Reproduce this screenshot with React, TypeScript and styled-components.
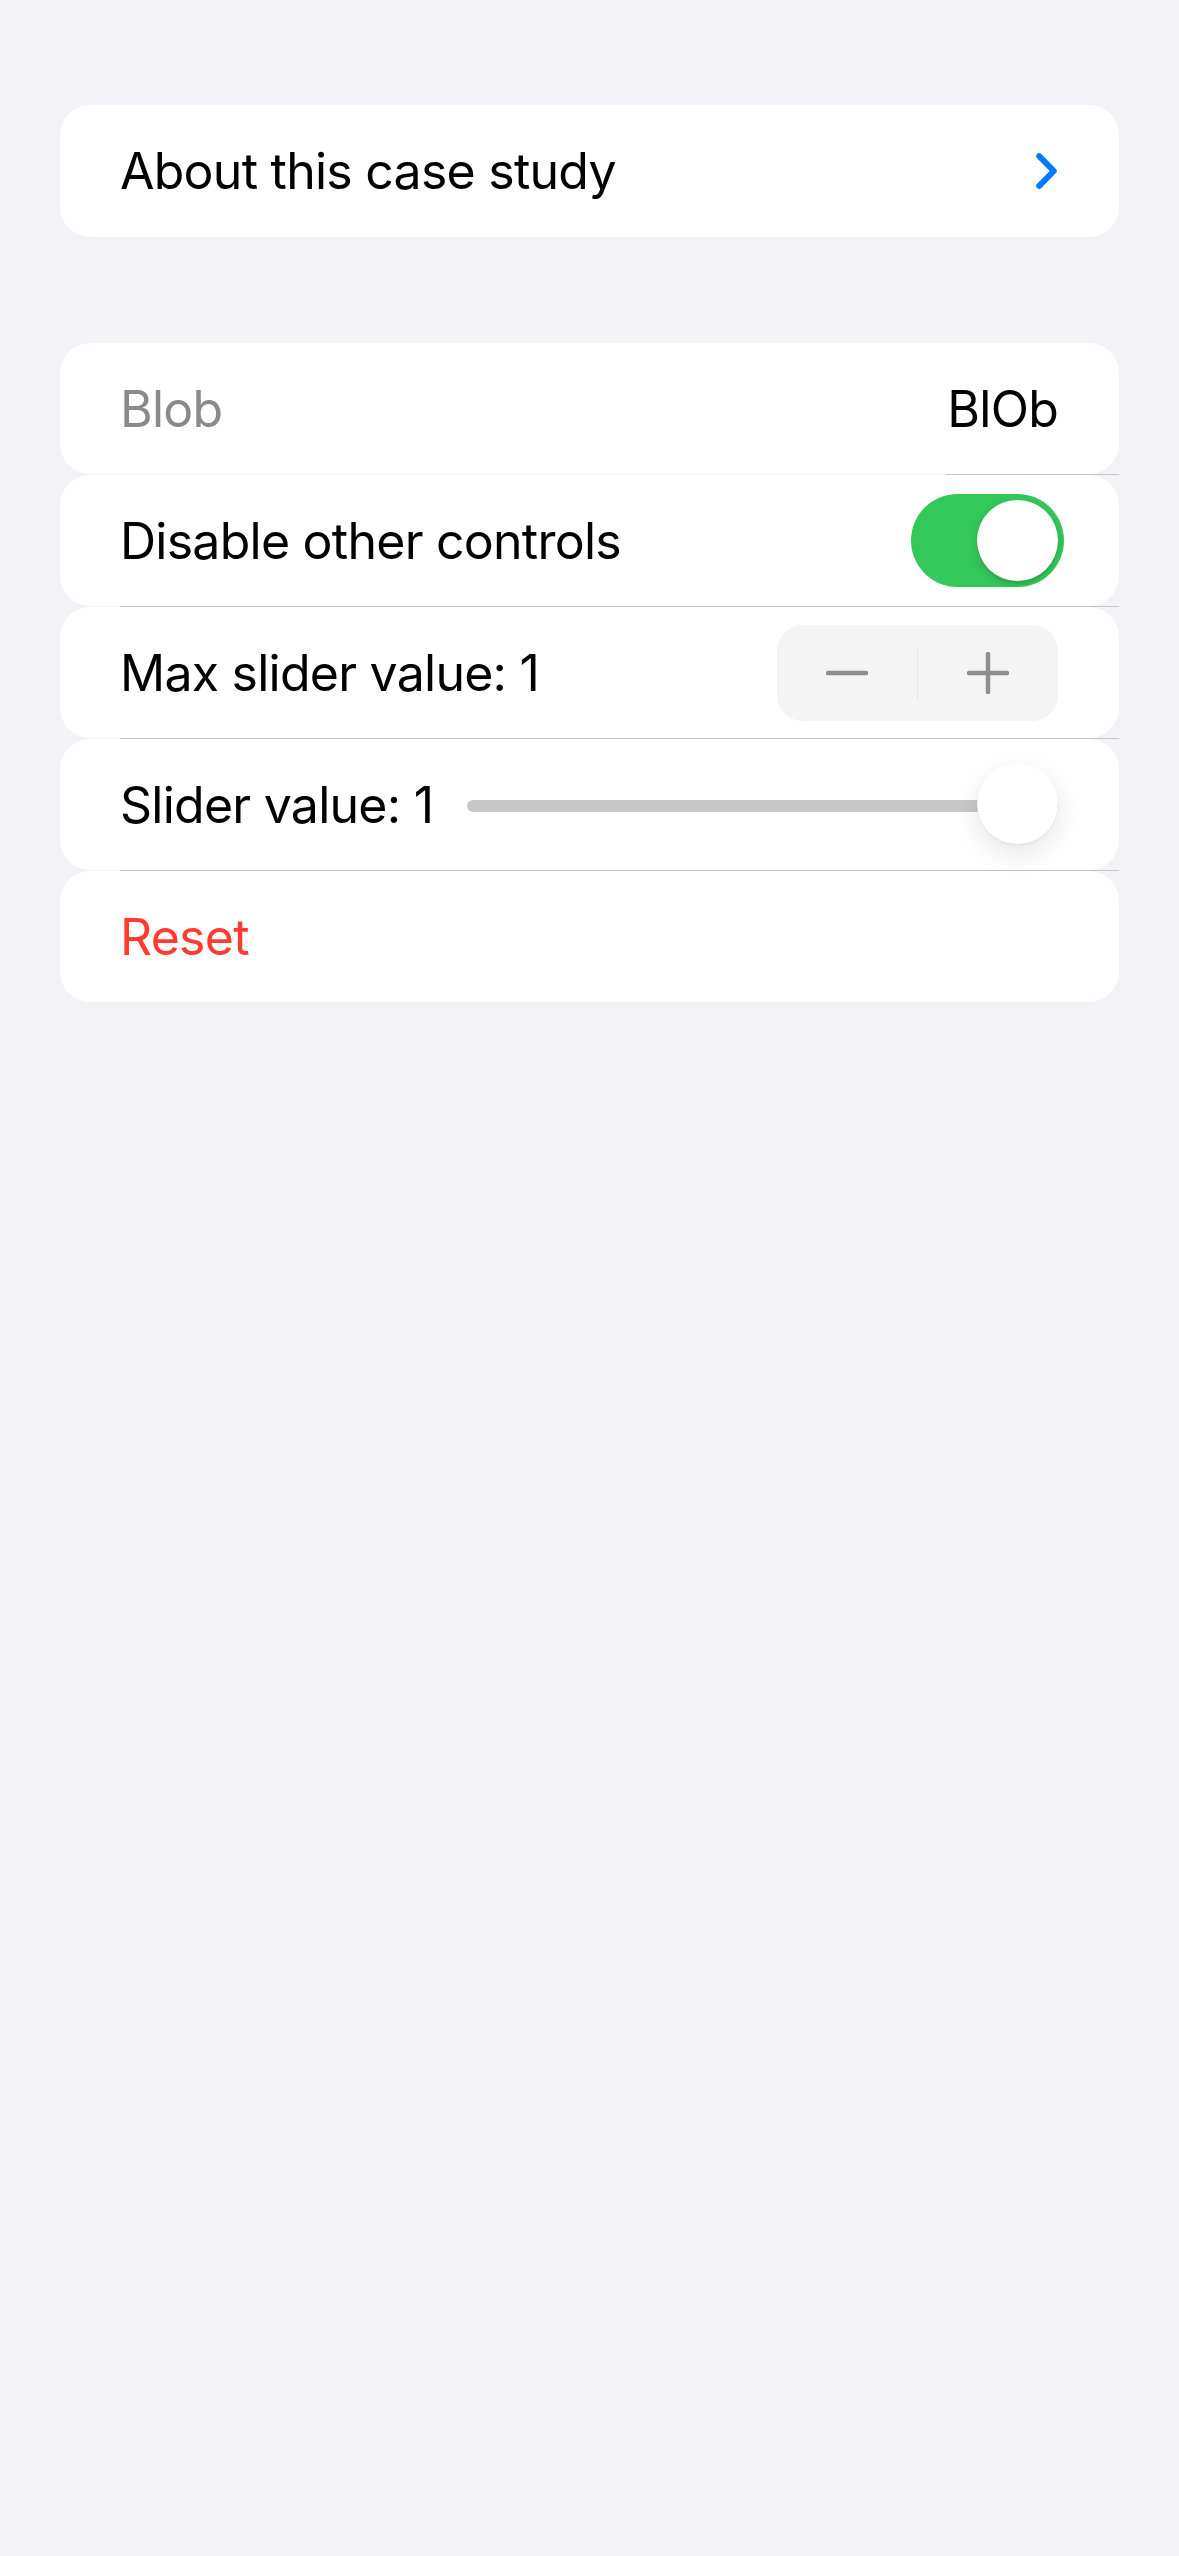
import React from "react";
import styled, { createGlobalStyle } from "styled-components";

const GlobalStyle = createGlobalStyle`
  html, body {
    margin: 0;
    padding: 0;
    background: #f2f2f7;
  }
  body {
    font-family: Inter, "Noto Sans", "Liberation Sans", sans-serif;
    -webkit-font-smoothing: antialiased;
  }
`;

const Page = styled.div`
  min-height: 2556px;
  box-sizing: border-box;
  padding: 105px 60px 0 60px;
  display: flex;
  flex-direction: column;
  gap: 106px;
`;

const Group = styled.div`
  display: flex;
  flex-direction: column;
`;

const Row = styled.div<{ $h?: number }>`
  height: ${(p) => p.$h ?? 131}px;
  background: #ffffff;
  border-radius: 30px;
  box-sizing: border-box;
  padding: 0 61px 0 60px;
  display: flex;
  align-items: center;
  justify-content: space-between;
`;

const Separator = styled.div<{ $inset: number }>`
  height: 1px;
  margin-left: ${(p) => p.$inset}px;
  background: #c6c6c8;
`;

const Label = styled.span<{ $tone?: "primary" | "secondary" | "destructive" }>`
  font-size: 50px;
  letter-spacing: -0.75px;
  line-height: 1;
  color: ${(p) =>
    p.$tone === "secondary" ? "#8a8a8e" : p.$tone === "destructive" ? "#ff3b30" : "#000000"};
  white-space: nowrap;
  flex: 0 0 auto;
`;

const Value = styled(Label)`
  text-align: right;
`;

const Chevron = styled.svg`
  width: 21px;
  height: 36px;
  margin-right: 1px;
`;

const Toggle = styled.div<{ $on: boolean }>`
  width: 153px;
  height: 93px;
  border-radius: 46.5px;
  background: ${(p) => (p.$on ? "#34c759" : "#e9e9ea")};
  margin-right: -6px;
  display: flex;
  align-items: center;
  justify-content: ${(p) => (p.$on ? "flex-end" : "flex-start")};
  padding: 0 6px;
  box-sizing: border-box;
`;

const ToggleKnob = styled.div`
  width: 81px;
  height: 81px;
  border-radius: 50%;
  background: #ffffff;
  box-shadow: 0 3px 8px rgba(0, 0, 0, 0.15), 0 3px 1px rgba(0, 0, 0, 0.06);
`;

const Stepper = styled.div`
  width: 281px;
  height: 96px;
  border-radius: 26px;
  background: #f4f4f5;
  display: flex;
  align-items: center;
`;

const StepButton = styled.div`
  flex: 1;
  height: 100%;
  display: flex;
  align-items: center;
  justify-content: center;
`;

const StepDivider = styled.div`
  width: 1px;
  height: 52px;
  background: #e4e4e6;
`;

const StepIcon = styled.svg`
  width: 42px;
  height: 42px;
`;

const SliderTrackWrap = styled.div`
  width: 591px;
  height: 81px;
  display: flex;
  align-items: center;
  position: relative;
  margin-top: 3px;
`;

const SliderTrack = styled.div`
  flex: 1;
  height: 12px;
  border-radius: 6px;
  background: #c8c8c8;
`;

const SliderKnob = styled.div`
  position: absolute;
  top: -3px;
  width: 81px;
  height: 81px;
  border-radius: 50%;
  background: #ffffff;
  box-shadow: 0 10px 26px rgba(0, 0, 0, 0.1), 0 1px 3px rgba(0, 0, 0, 0.06);
`;

export default function App() {
  const sliderValue = 1;
  const maxValue = 1;
  const knobLeft = (591 - 81) * (sliderValue / maxValue);
  return (
    <>
      <GlobalStyle />
      <Page>
        <Group>
          <Row $h={132}>
            <Label>About this case study</Label>
            <Chevron viewBox="0 0 21 36" fill="none">
              <path
                d="M3.2 3.2 L17.8 18 L3.2 32.8"
                stroke="#007aff"
                strokeWidth="6"
                strokeLinecap="round"
                strokeLinejoin="round"
              />
            </Chevron>
          </Row>
        </Group>
        <Group>
          <Row>
            <Label $tone="secondary">Blob</Label>
            <Value>BlOb</Value>
          </Row>
          <Separator $inset={886} />
          <Row>
            <Label>Disable other controls</Label>
            <Toggle $on>
              <ToggleKnob />
            </Toggle>
          </Row>
          <Separator $inset={60} />
          <Row>
            <Label>Max slider value: 1</Label>
            <Stepper>
              <StepButton>
                <StepIcon viewBox="0 0 42 42">
                  <line x1="2" y1="21" x2="40" y2="21" stroke="#8e8e8e" strokeWidth="4.5" strokeLinecap="round" />
                </StepIcon>
              </StepButton>
              <StepDivider />
              <StepButton>
                <StepIcon viewBox="0 0 42 42">
                  <line x1="2" y1="21" x2="40" y2="21" stroke="#8e8e8e" strokeWidth="4.5" strokeLinecap="round" />
                  <line x1="21" y1="2" x2="21" y2="40" stroke="#8e8e8e" strokeWidth="4.5" strokeLinecap="round" />
                </StepIcon>
              </StepButton>
            </Stepper>
          </Row>
          <Separator $inset={60} />
          <Row>
            <Label>Slider value: 1</Label>
            <SliderTrackWrap>
              <SliderTrack />
              <SliderKnob style={{ left: knobLeft }} />
            </SliderTrackWrap>
          </Row>
          <Separator $inset={60} />
          <Row>
            <Label $tone="destructive">Reset</Label>
          </Row>
        </Group>
      </Page>
    </>
  );
}
